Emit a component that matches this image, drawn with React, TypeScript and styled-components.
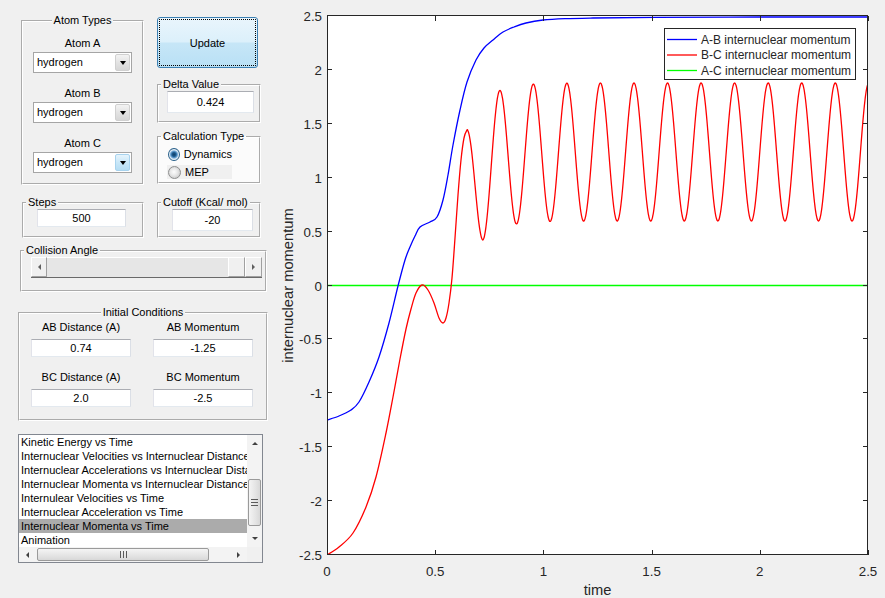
import styled, { createGlobalStyle } from 'styled-components'

const GlobalStyle = createGlobalStyle`
  * { box-sizing: border-box; }
  html, body { margin: 0; padding: 0; background: #f0f0f0; }
  body { font-family: 'Liberation Sans', Arial, sans-serif; }
`

const Window = styled.div`
  display: flex;
  width: 885px;
  height: 598px;
  overflow: hidden;
  background: #f0f0f0;
  color: #000;
  font-size: 11px;
`

const ControlPanel = styled.div`
  width: 270px;
  flex-shrink: 0;
  display: flex;
  flex-direction: column;
  align-items: flex-start;
`

const Row = styled.div<{ $top: number; $left: number; $gap?: number }>`
  display: flex;
  align-items: flex-start;
  margin-top: ${p => p.$top}px;
  padding-left: ${p => p.$left}px;
  gap: ${p => p.$gap ?? 0}px;
`

const Column = styled.div<{ $top: number; $width: number }>`
  display: flex;
  flex-direction: column;
  align-items: flex-start;
  margin-top: ${p => p.$top}px;
  width: ${p => p.$width}px;
`

const Group = styled.fieldset<{ $width: number; $pt: number; $pb: number; $top?: number; $bg?: string }>`
  width: ${p => p.$width}px;
  min-width: 0;
  margin: ${p => p.$top ?? 0}px 0 0;
  padding: ${p => p.$pt}px 0 ${p => p.$pb}px;
  border: 2px groove #ffffff;
  background: ${p => p.$bg ?? 'transparent'};
`

const GroupTitle = styled.legend<{ $center?: boolean }>`
  padding: 0 2px;
  margin: ${p => (p.$center ? '0 auto' : '0 0 0 2px')};
  font-size: 11px;
  line-height: 13px;
`

const Inset = styled.div<{ $left: number }>`
  display: flex;
  flex-direction: column;
  padding-left: ${p => p.$left}px;
`

const AtomStack = styled.div`
  display: flex;
  flex-direction: column;
  align-items: center;
  gap: 13px;
`

const AtomField = styled.div`
  display: flex;
  flex-direction: column;
  align-items: center;
  gap: 2px;
`

const FieldLabel = styled.span`
  line-height: 14px;
  white-space: nowrap;
`

const PopupBox = styled.div`
  display: flex;
  width: 99px;
  height: 21px;
  background: #fff;
  border: 1px solid #a5a5a5;
`

const PopupValue = styled.span`
  flex: 1;
  padding-left: 3px;
  line-height: 19px;
`

const PopupButton = styled.span<{ $active?: boolean }>`
  display: flex;
  align-items: center;
  justify-content: center;
  width: 15px;
  margin: 1px;
  border-radius: 2px;
  background: ${p =>
    p.$active
      ? 'linear-gradient(#e6f4fc, #c9e7f8 50%, #b5ddf3)'
      : 'linear-gradient(#f3f3f3, #e3e3e3 50%, #d6d6d6)'};
  border: 1px solid ${p => (p.$active ? '#a8d3ee' : '#d0d0d0')};
`

const Caret = styled.span`
  width: 0;
  height: 0;
  border-left: 3px solid transparent;
  border-right: 3px solid transparent;
  border-top: 4px solid #000;
`

const UpdateButton = styled.button`
  width: 101px;
  height: 51px;
  padding: 0;
  border: 1px solid #3c7fb1;
  border-radius: 3px;
  background: linear-gradient(#e9f5fc, #dcf0fb 48%, #c6e6f7 52%, #b9e0f5);
  font-family: 'Liberation Sans', Arial, sans-serif;
  font-size: 11px;
  color: #000;
  outline: 1px dotted #000;
  outline-offset: -3px;
`

const EditBox = styled.div<{ $width: number; $height: number }>`
  display: flex;
  align-items: center;
  justify-content: center;
  width: ${p => p.$width}px;
  height: ${p => p.$height}px;
  background: #fff;
  border: 1px solid #abadb3;
  border-color: #abadb3 #dbdfe6 #e3e9ef #e2e3ea;
`

const RadioList = styled.div`
  display: flex;
  flex-direction: column;
  gap: 4px;
`

const RadioRow = styled.div<{ $shaded?: boolean }>`
  display: flex;
  align-items: center;
  gap: 4px;
  width: 65px;
  height: 14px;
  padding-left: 1px;
  background: ${p => (p.$shaded ? '#f0f0f0' : 'transparent')};
`

const RadioDot = styled.span<{ $checked?: boolean }>`
  width: 13px;
  height: 13px;
  border-radius: 50%;
  border: 1px solid ${p => (p.$checked ? '#2c628b' : '#8e8f8f')};
  background: ${p =>
    p.$checked
      ? 'radial-gradient(circle, #0e3b63 0, #1f5d91 2px, #6ea6d6 3.5px, #d9e7f3 4.5px, #f4f7fa 6px)'
      : 'radial-gradient(circle at 45% 45%, #fdfdfd 0, #e8e8e8 3.5px, #d2d2d2 6px)'};
`

const Slider = styled.div`
  display: flex;
  width: 231px;
  height: 21px;
  border-bottom: 1px solid #696969;
`

const SliderButton = styled.div<{ $width: number }>`
  display: flex;
  align-items: center;
  justify-content: center;
  width: ${p => p.$width}px;
  background: #f0f0f0;
  border: 1px solid;
  border-color: #fff #a0a0a0 #a0a0a0 #fff;
`

const SliderTrack = styled.div`
  flex: 1;
  background: #e6e6e6;
  border-top: 1px solid #fff;
`

const Arrow = styled.span<{ $dir: 'left' | 'right' | 'up' | 'down'; $color?: string }>`
  width: 0;
  height: 0;
  border: 3px solid transparent;
  ${p => {
    const c = p.$color ?? '#404040'
    if (p.$dir === 'left') return `border-left-width: 0; border-right: 3px solid ${c};`
    if (p.$dir === 'right') return `border-right-width: 0; border-left: 3px solid ${c};`
    if (p.$dir === 'up') return `border-top-width: 0; border-bottom: 3px solid ${c};`
    return `border-bottom-width: 0; border-top: 3px solid ${c};`
  }}
`

const ConditionsGrid = styled.div`
  display: grid;
  grid-template-columns: 100px 100px;
  column-gap: 22px;
  padding-left: 11px;
  padding-top: 1px;
`

const ConditionCell = styled.div<{ $top: number }>`
  display: flex;
  flex-direction: column;
  align-items: center;
  gap: 5px;
  margin-top: ${p => p.$top}px;
`

const ListBox = styled.div`
  display: grid;
  grid-template-columns: 228px 15px;
  grid-template-rows: 112px 15px;
  width: 245px;
  height: 129px;
  margin-left: 18px;
  border: 1px solid #828790;
  background: #fff;
`

const ListItems = styled.div`
  overflow: hidden;
`

const ListItem = styled.div<{ $selected?: boolean }>`
  height: 14px;
  line-height: 14px;
  padding-left: 2px;
  white-space: nowrap;
  overflow: hidden;
  background: ${p => (p.$selected ? '#ababab' : 'transparent')};
`

const ScrollBar = styled.div<{ $vertical?: boolean }>`
  display: flex;
  flex-direction: ${p => (p.$vertical ? 'column' : 'row')};
  background: #f3f3f3;
`

const ScrollButton = styled.div<{ $vertical?: boolean }>`
  display: flex;
  align-items: center;
  justify-content: center;
  flex: 0 0 17px;
`

const ScrollTrack = styled.div<{ $vertical?: boolean }>`
  flex: 1;
  display: flex;
  flex-direction: ${p => (p.$vertical ? 'column' : 'row')};
  padding: ${p => (p.$vertical ? '27px 1px 0' : '1px 0 1px 1px')};
`

const ScrollThumb = styled.div<{ $vertical?: boolean }>`
  display: flex;
  align-items: center;
  justify-content: center;
  ${p => (p.$vertical ? 'height: 47px;' : 'width: 172px;')}
  border: 1px solid #9a9a9a;
  border-radius: 2px;
  background: ${p =>
    p.$vertical
      ? 'linear-gradient(to right, #f4f4f4, #e4e4e4 60%, #d8d8d8)'
      : 'linear-gradient(#f4f4f4, #e4e4e4 60%, #d8d8d8)'};
`

const Grip = styled.span<{ $vertical?: boolean }>`
  width: ${p => (p.$vertical ? 7 : 7)}px;
  height: ${p => (p.$vertical ? 7 : 7)}px;
  background: ${p =>
    p.$vertical
      ? 'repeating-linear-gradient(to bottom, #5a5a5a 0 1px, transparent 1px 3px)'
      : 'repeating-linear-gradient(to right, #5a5a5a 0 1px, transparent 1px 3px)'};
`

const Corner = styled.div`
  background: #f0f0f0;
`

const ChartArea = styled.div`
  flex: 1;
`

const PlotSvg = styled.svg`
  display: block;
  text {
    font-family: 'Liberation Sans', Arial, sans-serif;
    fill: #262626;
  }
`

// chart geometry (page pixels)
const X0 = 327
const X1 = 868
const Y0 = 16
const Y1 = 555
const xs = (t: number) => X0 + (t / 2.5) * (X1 - X0)
const ys = (v: number) => Y0 + ((2.5 - v) / 5) * (Y1 - Y0)

type Pt = [number, number]

const smooth = (pts: Pt[]) => {
  let d = `M${pts[0][0]},${pts[0][1]}`
  for (let i = 0; i < pts.length - 1; i++) {
    const p0 = pts[i - 1] ?? pts[i]
    const p1 = pts[i]
    const p2 = pts[i + 1]
    const p3 = pts[i + 2] ?? p2
    const c1x = p1[0] + (p2[0] - p0[0]) / 6
    const c1y = p1[1] + (p2[1] - p0[1]) / 6
    const c2x = p2[0] - (p3[0] - p1[0]) / 6
    const c2y = p2[1] - (p3[1] - p1[1]) / 6
    d += ` C${c1x.toFixed(2)},${c1y.toFixed(2)} ${c2x.toFixed(2)},${c2y.toFixed(2)} ${p2[0].toFixed(2)},${p2[1].toFixed(2)}`
  }
  return d
}

const BLUE: Pt[] = [
  [327, 420], [339, 416], [351, 410], [359, 402], [369, 382], [379, 357], [389, 323],
  [398, 286], [405, 260], [410, 247], [415, 236], [420, 227], [430, 222], [437, 217],
  [443, 200], [448, 175], [453, 145], [460, 110], [467, 82], [476, 60], [484, 48],
  [493, 40], [503, 32], [514, 27], [526, 23], [543, 20], [565, 18.6], [593, 18],
  [656, 17.3], [760, 17], [869, 17],
]

const redPoints = () => {
  const pts: Pt[] = [
    [327, 555], [339, 547], [353, 533], [366, 507], [376, 477], [386, 433], [393, 397],
    [400, 359], [406, 329], [411, 309], [416, 293], [422, 285], [428, 290], [434, 303],
    [439, 318], [443, 323], [446, 318], [449, 303], [452, 278], [455, 238], [458, 195],
    [461, 160], [464, 138], [467, 130],
  ]
  for (let x = 468; x <= 483; x += 1) {
    pts.push([x, 185 - 55 * Math.cos((Math.PI * (x - 467)) / 16)])
  }
  for (let x = 484; x <= 870; x += 0.5) {
    const mid = 152 + 19 * Math.exp(-(x - 483) / 18)
    pts.push([x, mid + 69 * Math.cos((2 * Math.PI * (x - 483)) / 33.55)])
  }
  return pts
}

const X_TICKS = ['0', '0.5', '1', '1.5', '2', '2.5']
const Y_TICKS = ['2.5', '2', '1.5', '1', '0.5', '0', '-0.5', '-1', '-1.5', '-2', '-2.5']

const LEGEND = [
  { label: 'A-B internuclear momentum', color: '#0000ff', y: 39.5 },
  { label: 'B-C internuclear momentum', color: '#ff0000', y: 55 },
  { label: 'A-C internuclear momentum', color: '#00ff00', y: 70.5 },
]

const MomentumChart = () => (
  <PlotSvg width={615} height={598} viewBox="270 0 615 598">
    <defs>
      <clipPath id="plot-clip">
        <rect x={X0} y={Y0} width={X1 - X0} height={Y1 - Y0} />
      </clipPath>
    </defs>
    <rect x={X0} y={Y0} width={X1 - X0} height={Y1 - Y0} fill="#fff" />
    <g clipPath="url(#plot-clip)" fill="none" strokeWidth={1.3}>
      <line x1={X0} x2={X1} y1={ys(0)} y2={ys(0)} stroke="#00ff00" />
      <path d={smooth(BLUE)} stroke="#0000ff" />
      <path d={smooth(redPoints())} stroke="#ff0000" />
    </g>
    <g stroke="#262626" strokeWidth={1} fill="none">
      <rect x={X0 + 0.5} y={Y0 - 0.5} width={X1 - X0 - 1} height={Y1 - Y0} />
      {X_TICKS.map((_, i) => {
        const x = Math.round(xs(i * 0.5)) + 0.5
        return (
          <g key={`xt${i}`}>
            <line x1={x} x2={x} y1={Y1} y2={Y1 - 5} />
            <line x1={x} x2={x} y1={Y0} y2={Y0 + 5} />
          </g>
        )
      })}
      {Y_TICKS.map((_, i) => {
        const y = Math.round(ys(2.5 - i * 0.5)) - 0.5
        return (
          <g key={`yt${i}`}>
            <line x1={X0} x2={X0 + 5} y1={y} y2={y} />
            <line x1={X1} x2={X1 - 5} y1={y} y2={y} />
          </g>
        )
      })}
    </g>
    {X_TICKS.map((label, i) => (
      <text key={`xl${i}`} x={xs(i * 0.5)} y={576} fontSize={13.3} textAnchor="middle">
        {label}
      </text>
    ))}
    {Y_TICKS.map((label, i) => (
      <text key={`yl${i}`} x={322} y={ys(2.5 - i * 0.5) + 5} fontSize={13.3} textAnchor="end">
        {label}
      </text>
    ))}
    <text x={(X0 + X1) / 2} y={595} fontSize={14.7} textAnchor="middle">
      time
    </text>
    <text transform={`translate(293 ${ys(0)}) rotate(-90)`} fontSize={14.7} textAnchor="middle">
      internuclear momentum
    </text>
    <rect x={664.5} y={28.5} width={191} height={51} fill="#fff" stroke="#262626" />
    {LEGEND.map(item => (
      <g key={item.label}>
        <line x1={667} x2={697} y1={item.y} y2={item.y} stroke={item.color} strokeWidth={1.3} />
        <text x={701} y={item.y + 4.3} fontSize={12}>
          {item.label}
        </text>
      </g>
    ))}
  </PlotSvg>
)

const Popup = ({ value, active }: { value: string; active?: boolean }) => (
  <PopupBox>
    <PopupValue>{value}</PopupValue>
    <PopupButton $active={active}>
      <Caret />
    </PopupButton>
  </PopupBox>
)

const PLOT_TYPES = [
  'Kinetic Energy vs Time',
  'Internuclear Velocities vs Internuclear Distance',
  'Internuclear Accelerations vs Internuclear Distance',
  'Internuclear Momenta vs Internuclear Distance',
  'Internulear Velocities vs Time',
  'Internuclear Acceleration vs Time',
  'Internuclear Momenta vs Time',
  'Animation',
]

const ATOMS = [
  { label: 'Atom A', active: false },
  { label: 'Atom B', active: false },
  { label: 'Atom C', active: true },
]

export default function App() {
  return (
    <>
      <GlobalStyle />
      <Window>
        <ControlPanel>
          <Row $top={14} $left={21} $gap={13}>
            <Group $width={123} $pt={9} $pb={10}>
              <GroupTitle $center>Atom Types</GroupTitle>
              <AtomStack>
                {ATOMS.map(atom => (
                  <AtomField key={atom.label}>
                    <FieldLabel>{atom.label}</FieldLabel>
                    <Popup value="hydrogen" active={atom.active} />
                  </AtomField>
                ))}
              </AtomStack>
            </Group>

            <Column $top={3} $width={104}>
              <UpdateButton>Update</UpdateButton>
              <Group $width={104} $pt={0} $pb={8} $top={10}>
                <GroupTitle>Delta Value</GroupTitle>
                <Inset $left={8}>
                  <EditBox $width={87} $height={22}>0.424</EditBox>
                </Inset>
              </Group>
              <Group $width={104} $pt={4} $pb={3} $top={7} $bg="#fbfbfb">
                <GroupTitle>Calculation Type</GroupTitle>
                <Inset $left={8}>
                  <RadioList>
                    <RadioRow>
                      <RadioDot $checked />
                      <span>Dynamics</span>
                    </RadioRow>
                    <RadioRow $shaded>
                      <RadioDot />
                      <span>MEP</span>
                    </RadioRow>
                  </RadioList>
                </Inset>
              </Group>
            </Column>
          </Row>

          <Row $top={11} $left={22} $gap={13}>
            <Group $width={122} $pt={0} $pb={9}>
              <GroupTitle>Steps</GroupTitle>
              <Inset $left={13}>
                <EditBox $width={89} $height={18}>500</EditBox>
              </Inset>
            </Group>
            <Group $width={104} $pt={0} $pb={5}>
              <GroupTitle>Cutoff (Kcal/ mol)</GroupTitle>
              <Inset $left={13}>
                <EditBox $width={81} $height={22}>-20</EditBox>
              </Inset>
            </Group>
          </Row>

          <Row $top={6} $left={20}>
            <Group $width={247} $pt={0} $pb={12}>
              <GroupTitle>Collision Angle</GroupTitle>
              <Inset $left={9}>
                <Slider>
                  <SliderButton $width={16}>
                    <Arrow $dir="left" $color="#606060" />
                  </SliderButton>
                  <SliderTrack />
                  <SliderButton $width={17} />
                  <SliderButton $width={17}>
                    <Arrow $dir="right" $color="#606060" />
                  </SliderButton>
                </Slider>
              </Inset>
            </Group>
          </Row>

          <Row $top={14} $left={18}>
            <Group $width={250} $pt={0} $pb={12}>
              <GroupTitle $center>Initial Conditions</GroupTitle>
              <ConditionsGrid>
                <ConditionCell $top={0}>
                  <FieldLabel>AB Distance (A)</FieldLabel>
                  <EditBox $width={100} $height={18}>0.74</EditBox>
                </ConditionCell>
                <ConditionCell $top={0}>
                  <FieldLabel>AB Momentum</FieldLabel>
                  <EditBox $width={100} $height={18}>-1.25</EditBox>
                </ConditionCell>
                <ConditionCell $top={13}>
                  <FieldLabel>BC Distance (A)</FieldLabel>
                  <EditBox $width={100} $height={18}>2.0</EditBox>
                </ConditionCell>
                <ConditionCell $top={13}>
                  <FieldLabel>BC Momentum</FieldLabel>
                  <EditBox $width={100} $height={18}>-2.5</EditBox>
                </ConditionCell>
              </ConditionsGrid>
            </Group>
          </Row>

          <Row $top={13} $left={0}>
            <ListBox>
              <ListItems>
                {PLOT_TYPES.map((item, i) => (
                  <ListItem key={item} $selected={i === 6}>
                    {item}
                  </ListItem>
                ))}
              </ListItems>
              <ScrollBar $vertical>
                <ScrollButton $vertical>
                  <Arrow $dir="up" />
                </ScrollButton>
                <ScrollTrack $vertical>
                  <ScrollThumb $vertical>
                    <Grip $vertical />
                  </ScrollThumb>
                </ScrollTrack>
                <ScrollButton $vertical>
                  <Arrow $dir="down" />
                </ScrollButton>
              </ScrollBar>
              <ScrollBar>
                <ScrollButton>
                  <Arrow $dir="left" />
                </ScrollButton>
                <ScrollTrack>
                  <ScrollThumb>
                    <Grip />
                  </ScrollThumb>
                </ScrollTrack>
                <ScrollButton>
                  <Arrow $dir="right" />
                </ScrollButton>
              </ScrollBar>
              <Corner />
            </ListBox>
          </Row>
        </ControlPanel>

        <ChartArea>
          <MomentumChart />
        </ChartArea>
      </Window>
    </>
  )
}
